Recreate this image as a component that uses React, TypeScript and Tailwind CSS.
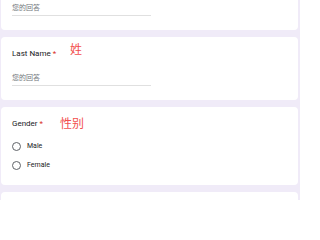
import React from 'react';

type Question = {
  title: string;
  note: string;
  noteClass: string;
  options?: string[];
};

// first card is scrolled mostly out of view, only its answer line shows
const questions: Question[] = [
  { title: '', note: '', noteClass: '' },
  { title: 'Last Name', note: '姓', noteClass: 'left-[69px] top-[7px]' },
  { title: 'Gender', note: '性别', noteClass: 'left-[59px] top-[11px]', options: ['Male', 'Female'] },
];

const Title: React.FC<{ text: string }> = ({ text }) => (
  <div className="h-[12px] text-[8px] leading-[12px] text-[#202124]">
    {text && (
      <>
        {text} <span className="text-[#d93025]">*</span>
      </>
    )}
  </div>
);

const App: React.FC = () => {
  return (
    <div
      className="h-[200px] w-[300px] overflow-hidden bg-[#f0ebf8]"
      style={{ fontFamily: 'Roboto, "Noto Sans CJK SC", sans-serif' }}
    >
      <div className="-mt-[33px] flex flex-col gap-[7px] pl-[1px] pr-[2px]">
        {questions.map((q, i) => (
          <div key={i} className="relative rounded-[4px] bg-white px-[11px] pt-[11px]">
            <Title text={q.title} />
            {q.options ? (
              <div className="mt-[9px] flex flex-col gap-[5px] pb-[13px]">
                {q.options.map(opt => (
                  <div key={opt} className="flex h-[14px] items-center gap-[6px]">
                    <span className="h-[9px] w-[9px] rounded-full border-[1.5px] border-[#5f6368]" />
                    <span className="text-[7px] text-[#202124]">{opt}</span>
                  </div>
                ))}
              </div>
            ) : (
              <div className="pb-[14px]">
                <div className="mt-[13px] h-[13px] w-[139px] border-b border-[#e0e0e0] text-[7px] leading-[10px] text-[#70757a]">
                  您的回答
                </div>
              </div>
            )}
            {q.note && (
              <span className={`absolute text-[12px] leading-[12px] text-[#f24e4e] ${q.noteClass}`}>
                {q.note}
              </span>
            )}
          </div>
        ))}
        <div className="h-[40px] rounded-[4px] bg-white" />
      </div>
    </div>
  );
};

export default App;
